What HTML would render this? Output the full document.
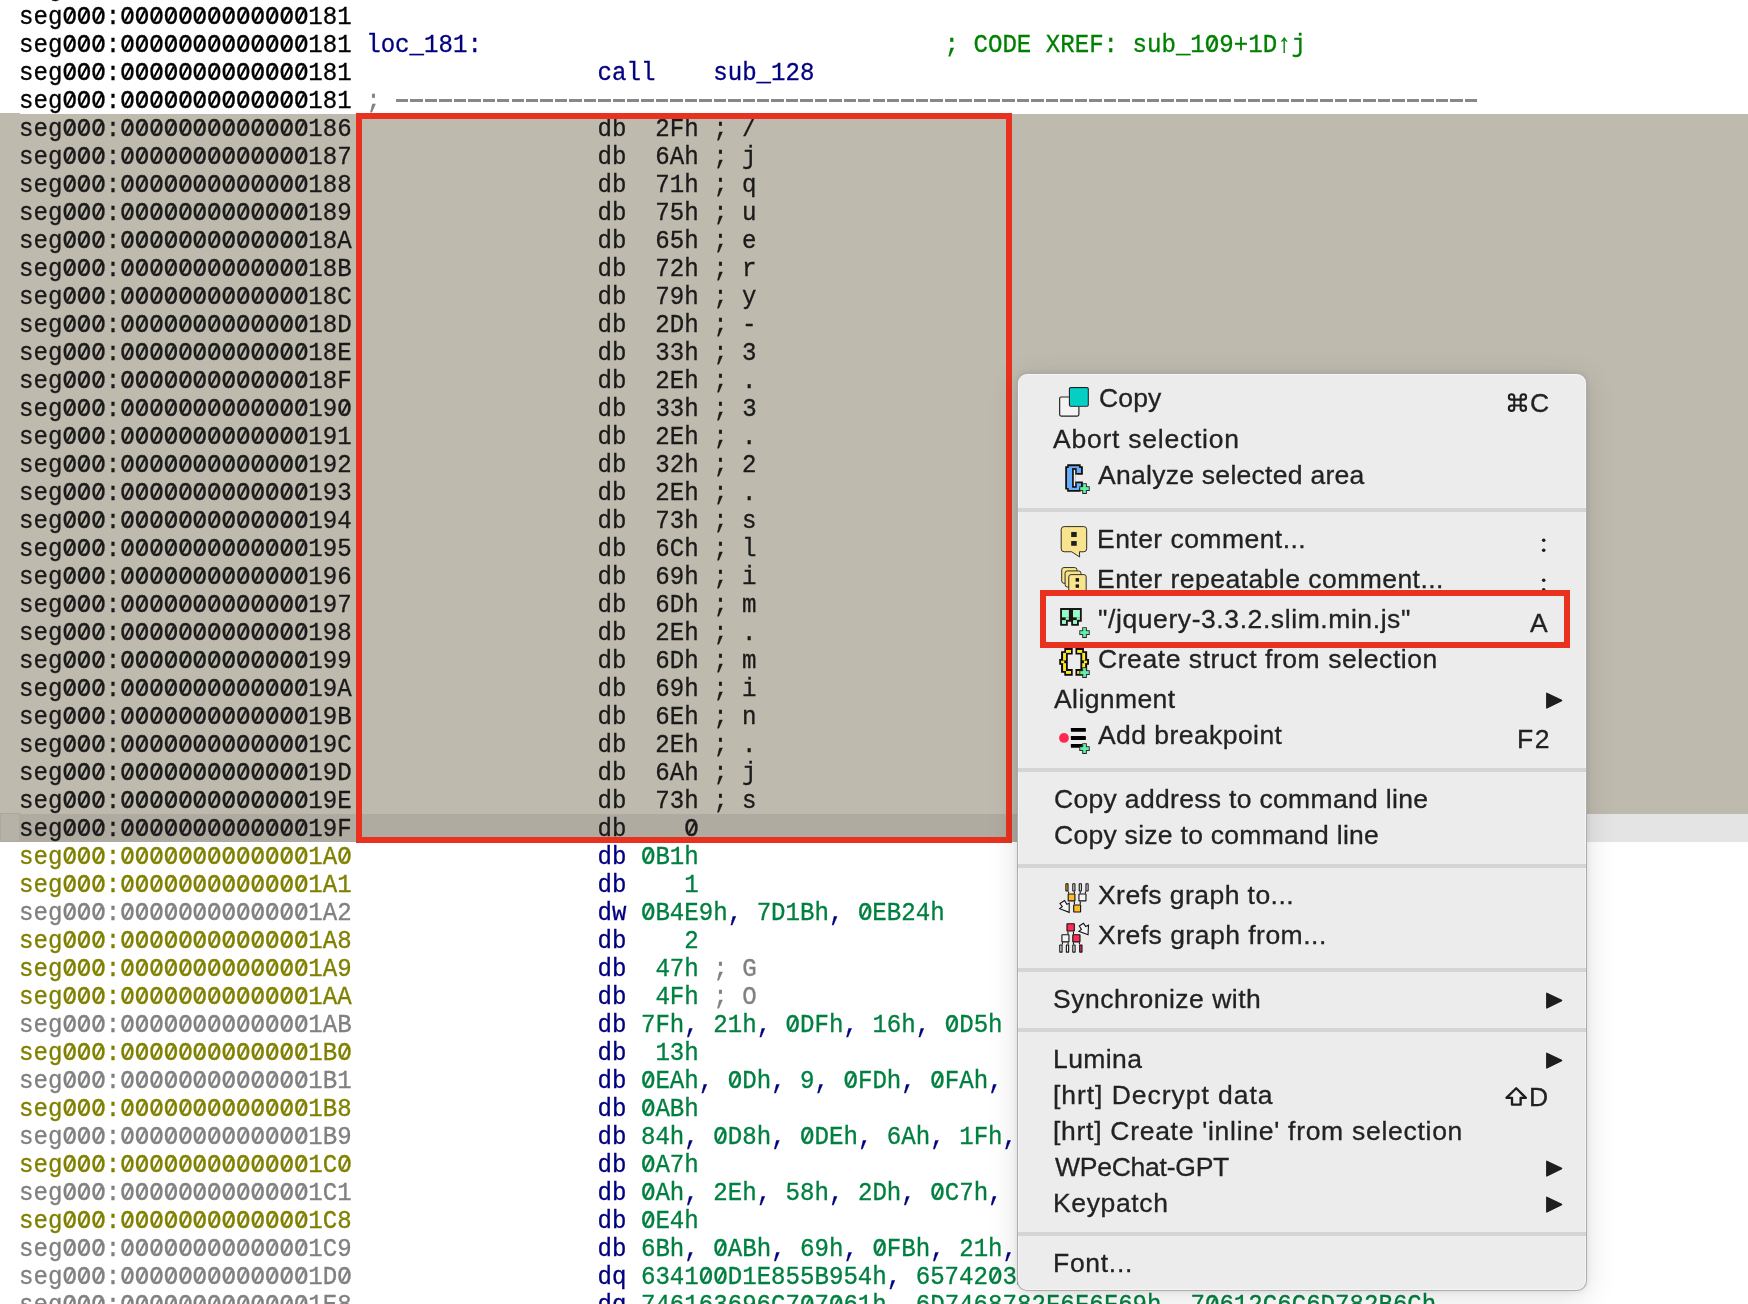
<!DOCTYPE html><html><head><meta charset="utf-8"><style>
html,body{margin:0;padding:0}
body{width:1748px;height:1304px;overflow:hidden;position:relative;background:#fff}
.r{position:absolute;left:0;width:1748px;height:28px}
.t{position:absolute;will-change:transform;left:19px;top:1.5px;white-space:pre;font-family:"Liberation Mono",monospace;font-size:24.1px;line-height:28px;transform:scaleY(1.09);transform-origin:0 20.5px;-webkit-text-stroke:0.3px currentColor}
.z{font-style:normal;position:relative}
.z::after{content:'';position:absolute;left:6.3px;top:6.6px;width:1.9px;height:11px;background:currentColor;transform:rotate(30deg)}
.m{position:absolute;will-change:transform;-webkit-text-stroke:0.3px #222;font-family:"Liberation Sans",sans-serif;font-size:26.5px;color:#222;white-space:pre;line-height:30px}

</style></head><body>
<div style="position:absolute;left:0;top:113px;width:20px;height:701px;background:#bfbaae"></div>
<div style="position:absolute;left:20px;top:114px;width:1728px;height:700px;background:#bfbaae"></div>
<div style="position:absolute;left:0;top:813px;width:20px;height:29px;background:#b6b2a7;box-shadow:inset 0 0 0 1px #aca89d"></div>
<div style="position:absolute;left:20px;top:814px;width:1300px;height:28px;background:#b0aba0"></div>
<div style="position:absolute;left:1320px;top:814px;width:428px;height:28px;background:#e4e4e4"></div>
<div class="r" style="top:-26px"><div class="t"><span style="color:#000000">seg<i class="z">O</i><i class="z">O</i><i class="z">O</i>:<i class="z">O</i><i class="z">O</i><i class="z">O</i><i class="z">O</i><i class="z">O</i><i class="z">O</i><i class="z">O</i><i class="z">O</i><i class="z">O</i><i class="z">O</i><i class="z">O</i><i class="z">O</i><i class="z">O</i>181</span></div></div>
<div class="r" style="top:2px"><div class="t"><span style="color:#000000">seg<i class="z">O</i><i class="z">O</i><i class="z">O</i>:<i class="z">O</i><i class="z">O</i><i class="z">O</i><i class="z">O</i><i class="z">O</i><i class="z">O</i><i class="z">O</i><i class="z">O</i><i class="z">O</i><i class="z">O</i><i class="z">O</i><i class="z">O</i><i class="z">O</i>181</span></div></div>
<div class="r" style="top:30px"><div class="t"><span style="color:#000000">seg<i class="z">O</i><i class="z">O</i><i class="z">O</i>:<i class="z">O</i><i class="z">O</i><i class="z">O</i><i class="z">O</i><i class="z">O</i><i class="z">O</i><i class="z">O</i><i class="z">O</i><i class="z">O</i><i class="z">O</i><i class="z">O</i><i class="z">O</i><i class="z">O</i>181 </span><span style="color:#000080">loc_181:</span><span style="color:#000000">                                </span><span style="color:#008000">; CODE XREF: sub_1<i class="z">O</i>9+1D↑j</span></div></div>
<div class="r" style="top:58px"><div class="t"><span style="color:#000000">seg<i class="z">O</i><i class="z">O</i><i class="z">O</i>:<i class="z">O</i><i class="z">O</i><i class="z">O</i><i class="z">O</i><i class="z">O</i><i class="z">O</i><i class="z">O</i><i class="z">O</i><i class="z">O</i><i class="z">O</i><i class="z">O</i><i class="z">O</i><i class="z">O</i>181                 </span><span style="color:#000080">call</span><span style="color:#000000">    </span><span style="color:#000080">sub_128</span></div></div>
<div class="r" style="top:86px"><div class="t"><span style="color:#000000">seg<i class="z">O</i><i class="z">O</i><i class="z">O</i>:<i class="z">O</i><i class="z">O</i><i class="z">O</i><i class="z">O</i><i class="z">O</i><i class="z">O</i><i class="z">O</i><i class="z">O</i><i class="z">O</i><i class="z">O</i><i class="z">O</i><i class="z">O</i><i class="z">O</i>181 </span><span style="color:#808080">;</span></div></div>
<div class="r" style="top:114px"><div class="t"><span style="color:#1a1a1a">seg<i class="z">O</i><i class="z">O</i><i class="z">O</i>:<i class="z">O</i><i class="z">O</i><i class="z">O</i><i class="z">O</i><i class="z">O</i><i class="z">O</i><i class="z">O</i><i class="z">O</i><i class="z">O</i><i class="z">O</i><i class="z">O</i><i class="z">O</i><i class="z">O</i>186                 db  2Fh ; /</span></div></div>
<div class="r" style="top:142px"><div class="t"><span style="color:#1a1a1a">seg<i class="z">O</i><i class="z">O</i><i class="z">O</i>:<i class="z">O</i><i class="z">O</i><i class="z">O</i><i class="z">O</i><i class="z">O</i><i class="z">O</i><i class="z">O</i><i class="z">O</i><i class="z">O</i><i class="z">O</i><i class="z">O</i><i class="z">O</i><i class="z">O</i>187                 db  6Ah ; j</span></div></div>
<div class="r" style="top:170px"><div class="t"><span style="color:#1a1a1a">seg<i class="z">O</i><i class="z">O</i><i class="z">O</i>:<i class="z">O</i><i class="z">O</i><i class="z">O</i><i class="z">O</i><i class="z">O</i><i class="z">O</i><i class="z">O</i><i class="z">O</i><i class="z">O</i><i class="z">O</i><i class="z">O</i><i class="z">O</i><i class="z">O</i>188                 db  71h ; q</span></div></div>
<div class="r" style="top:198px"><div class="t"><span style="color:#1a1a1a">seg<i class="z">O</i><i class="z">O</i><i class="z">O</i>:<i class="z">O</i><i class="z">O</i><i class="z">O</i><i class="z">O</i><i class="z">O</i><i class="z">O</i><i class="z">O</i><i class="z">O</i><i class="z">O</i><i class="z">O</i><i class="z">O</i><i class="z">O</i><i class="z">O</i>189                 db  75h ; u</span></div></div>
<div class="r" style="top:226px"><div class="t"><span style="color:#1a1a1a">seg<i class="z">O</i><i class="z">O</i><i class="z">O</i>:<i class="z">O</i><i class="z">O</i><i class="z">O</i><i class="z">O</i><i class="z">O</i><i class="z">O</i><i class="z">O</i><i class="z">O</i><i class="z">O</i><i class="z">O</i><i class="z">O</i><i class="z">O</i><i class="z">O</i>18A                 db  65h ; e</span></div></div>
<div class="r" style="top:254px"><div class="t"><span style="color:#1a1a1a">seg<i class="z">O</i><i class="z">O</i><i class="z">O</i>:<i class="z">O</i><i class="z">O</i><i class="z">O</i><i class="z">O</i><i class="z">O</i><i class="z">O</i><i class="z">O</i><i class="z">O</i><i class="z">O</i><i class="z">O</i><i class="z">O</i><i class="z">O</i><i class="z">O</i>18B                 db  72h ; r</span></div></div>
<div class="r" style="top:282px"><div class="t"><span style="color:#1a1a1a">seg<i class="z">O</i><i class="z">O</i><i class="z">O</i>:<i class="z">O</i><i class="z">O</i><i class="z">O</i><i class="z">O</i><i class="z">O</i><i class="z">O</i><i class="z">O</i><i class="z">O</i><i class="z">O</i><i class="z">O</i><i class="z">O</i><i class="z">O</i><i class="z">O</i>18C                 db  79h ; y</span></div></div>
<div class="r" style="top:310px"><div class="t"><span style="color:#1a1a1a">seg<i class="z">O</i><i class="z">O</i><i class="z">O</i>:<i class="z">O</i><i class="z">O</i><i class="z">O</i><i class="z">O</i><i class="z">O</i><i class="z">O</i><i class="z">O</i><i class="z">O</i><i class="z">O</i><i class="z">O</i><i class="z">O</i><i class="z">O</i><i class="z">O</i>18D                 db  2Dh ; -</span></div></div>
<div class="r" style="top:338px"><div class="t"><span style="color:#1a1a1a">seg<i class="z">O</i><i class="z">O</i><i class="z">O</i>:<i class="z">O</i><i class="z">O</i><i class="z">O</i><i class="z">O</i><i class="z">O</i><i class="z">O</i><i class="z">O</i><i class="z">O</i><i class="z">O</i><i class="z">O</i><i class="z">O</i><i class="z">O</i><i class="z">O</i>18E                 db  33h ; 3</span></div></div>
<div class="r" style="top:366px"><div class="t"><span style="color:#1a1a1a">seg<i class="z">O</i><i class="z">O</i><i class="z">O</i>:<i class="z">O</i><i class="z">O</i><i class="z">O</i><i class="z">O</i><i class="z">O</i><i class="z">O</i><i class="z">O</i><i class="z">O</i><i class="z">O</i><i class="z">O</i><i class="z">O</i><i class="z">O</i><i class="z">O</i>18F                 db  2Eh ; .</span></div></div>
<div class="r" style="top:394px"><div class="t"><span style="color:#1a1a1a">seg<i class="z">O</i><i class="z">O</i><i class="z">O</i>:<i class="z">O</i><i class="z">O</i><i class="z">O</i><i class="z">O</i><i class="z">O</i><i class="z">O</i><i class="z">O</i><i class="z">O</i><i class="z">O</i><i class="z">O</i><i class="z">O</i><i class="z">O</i><i class="z">O</i>19<i class="z">O</i>                 db  33h ; 3</span></div></div>
<div class="r" style="top:422px"><div class="t"><span style="color:#1a1a1a">seg<i class="z">O</i><i class="z">O</i><i class="z">O</i>:<i class="z">O</i><i class="z">O</i><i class="z">O</i><i class="z">O</i><i class="z">O</i><i class="z">O</i><i class="z">O</i><i class="z">O</i><i class="z">O</i><i class="z">O</i><i class="z">O</i><i class="z">O</i><i class="z">O</i>191                 db  2Eh ; .</span></div></div>
<div class="r" style="top:450px"><div class="t"><span style="color:#1a1a1a">seg<i class="z">O</i><i class="z">O</i><i class="z">O</i>:<i class="z">O</i><i class="z">O</i><i class="z">O</i><i class="z">O</i><i class="z">O</i><i class="z">O</i><i class="z">O</i><i class="z">O</i><i class="z">O</i><i class="z">O</i><i class="z">O</i><i class="z">O</i><i class="z">O</i>192                 db  32h ; 2</span></div></div>
<div class="r" style="top:478px"><div class="t"><span style="color:#1a1a1a">seg<i class="z">O</i><i class="z">O</i><i class="z">O</i>:<i class="z">O</i><i class="z">O</i><i class="z">O</i><i class="z">O</i><i class="z">O</i><i class="z">O</i><i class="z">O</i><i class="z">O</i><i class="z">O</i><i class="z">O</i><i class="z">O</i><i class="z">O</i><i class="z">O</i>193                 db  2Eh ; .</span></div></div>
<div class="r" style="top:506px"><div class="t"><span style="color:#1a1a1a">seg<i class="z">O</i><i class="z">O</i><i class="z">O</i>:<i class="z">O</i><i class="z">O</i><i class="z">O</i><i class="z">O</i><i class="z">O</i><i class="z">O</i><i class="z">O</i><i class="z">O</i><i class="z">O</i><i class="z">O</i><i class="z">O</i><i class="z">O</i><i class="z">O</i>194                 db  73h ; s</span></div></div>
<div class="r" style="top:534px"><div class="t"><span style="color:#1a1a1a">seg<i class="z">O</i><i class="z">O</i><i class="z">O</i>:<i class="z">O</i><i class="z">O</i><i class="z">O</i><i class="z">O</i><i class="z">O</i><i class="z">O</i><i class="z">O</i><i class="z">O</i><i class="z">O</i><i class="z">O</i><i class="z">O</i><i class="z">O</i><i class="z">O</i>195                 db  6Ch ; l</span></div></div>
<div class="r" style="top:562px"><div class="t"><span style="color:#1a1a1a">seg<i class="z">O</i><i class="z">O</i><i class="z">O</i>:<i class="z">O</i><i class="z">O</i><i class="z">O</i><i class="z">O</i><i class="z">O</i><i class="z">O</i><i class="z">O</i><i class="z">O</i><i class="z">O</i><i class="z">O</i><i class="z">O</i><i class="z">O</i><i class="z">O</i>196                 db  69h ; i</span></div></div>
<div class="r" style="top:590px"><div class="t"><span style="color:#1a1a1a">seg<i class="z">O</i><i class="z">O</i><i class="z">O</i>:<i class="z">O</i><i class="z">O</i><i class="z">O</i><i class="z">O</i><i class="z">O</i><i class="z">O</i><i class="z">O</i><i class="z">O</i><i class="z">O</i><i class="z">O</i><i class="z">O</i><i class="z">O</i><i class="z">O</i>197                 db  6Dh ; m</span></div></div>
<div class="r" style="top:618px"><div class="t"><span style="color:#1a1a1a">seg<i class="z">O</i><i class="z">O</i><i class="z">O</i>:<i class="z">O</i><i class="z">O</i><i class="z">O</i><i class="z">O</i><i class="z">O</i><i class="z">O</i><i class="z">O</i><i class="z">O</i><i class="z">O</i><i class="z">O</i><i class="z">O</i><i class="z">O</i><i class="z">O</i>198                 db  2Eh ; .</span></div></div>
<div class="r" style="top:646px"><div class="t"><span style="color:#1a1a1a">seg<i class="z">O</i><i class="z">O</i><i class="z">O</i>:<i class="z">O</i><i class="z">O</i><i class="z">O</i><i class="z">O</i><i class="z">O</i><i class="z">O</i><i class="z">O</i><i class="z">O</i><i class="z">O</i><i class="z">O</i><i class="z">O</i><i class="z">O</i><i class="z">O</i>199                 db  6Dh ; m</span></div></div>
<div class="r" style="top:674px"><div class="t"><span style="color:#1a1a1a">seg<i class="z">O</i><i class="z">O</i><i class="z">O</i>:<i class="z">O</i><i class="z">O</i><i class="z">O</i><i class="z">O</i><i class="z">O</i><i class="z">O</i><i class="z">O</i><i class="z">O</i><i class="z">O</i><i class="z">O</i><i class="z">O</i><i class="z">O</i><i class="z">O</i>19A                 db  69h ; i</span></div></div>
<div class="r" style="top:702px"><div class="t"><span style="color:#1a1a1a">seg<i class="z">O</i><i class="z">O</i><i class="z">O</i>:<i class="z">O</i><i class="z">O</i><i class="z">O</i><i class="z">O</i><i class="z">O</i><i class="z">O</i><i class="z">O</i><i class="z">O</i><i class="z">O</i><i class="z">O</i><i class="z">O</i><i class="z">O</i><i class="z">O</i>19B                 db  6Eh ; n</span></div></div>
<div class="r" style="top:730px"><div class="t"><span style="color:#1a1a1a">seg<i class="z">O</i><i class="z">O</i><i class="z">O</i>:<i class="z">O</i><i class="z">O</i><i class="z">O</i><i class="z">O</i><i class="z">O</i><i class="z">O</i><i class="z">O</i><i class="z">O</i><i class="z">O</i><i class="z">O</i><i class="z">O</i><i class="z">O</i><i class="z">O</i>19C                 db  2Eh ; .</span></div></div>
<div class="r" style="top:758px"><div class="t"><span style="color:#1a1a1a">seg<i class="z">O</i><i class="z">O</i><i class="z">O</i>:<i class="z">O</i><i class="z">O</i><i class="z">O</i><i class="z">O</i><i class="z">O</i><i class="z">O</i><i class="z">O</i><i class="z">O</i><i class="z">O</i><i class="z">O</i><i class="z">O</i><i class="z">O</i><i class="z">O</i>19D                 db  6Ah ; j</span></div></div>
<div class="r" style="top:786px"><div class="t"><span style="color:#1a1a1a">seg<i class="z">O</i><i class="z">O</i><i class="z">O</i>:<i class="z">O</i><i class="z">O</i><i class="z">O</i><i class="z">O</i><i class="z">O</i><i class="z">O</i><i class="z">O</i><i class="z">O</i><i class="z">O</i><i class="z">O</i><i class="z">O</i><i class="z">O</i><i class="z">O</i>19E                 db  73h ; s</span></div></div>
<div class="r" style="top:814px"><div class="t"><span style="color:#1a1a1a">seg<i class="z">O</i><i class="z">O</i><i class="z">O</i>:<i class="z">O</i><i class="z">O</i><i class="z">O</i><i class="z">O</i><i class="z">O</i><i class="z">O</i><i class="z">O</i><i class="z">O</i><i class="z">O</i><i class="z">O</i><i class="z">O</i><i class="z">O</i><i class="z">O</i>19F                 db    <i class="z">O</i></span></div></div>
<div class="r" style="top:842px"><div class="t"><span style="color:#808000">seg<i class="z">O</i><i class="z">O</i><i class="z">O</i>:<i class="z">O</i><i class="z">O</i><i class="z">O</i><i class="z">O</i><i class="z">O</i><i class="z">O</i><i class="z">O</i><i class="z">O</i><i class="z">O</i><i class="z">O</i><i class="z">O</i><i class="z">O</i><i class="z">O</i>1A<i class="z">O</i></span><span style="color:#000000">                 </span><span style="color:#000080">db</span><span style="color:#000000"> </span><span style="color:#008040"><i class="z">O</i>B1h</span></div></div>
<div class="r" style="top:870px"><div class="t"><span style="color:#808000">seg<i class="z">O</i><i class="z">O</i><i class="z">O</i>:<i class="z">O</i><i class="z">O</i><i class="z">O</i><i class="z">O</i><i class="z">O</i><i class="z">O</i><i class="z">O</i><i class="z">O</i><i class="z">O</i><i class="z">O</i><i class="z">O</i><i class="z">O</i><i class="z">O</i>1A1</span><span style="color:#000000">                 </span><span style="color:#000080">db</span><span style="color:#000000"> </span><span style="color:#008040">   1</span></div></div>
<div class="r" style="top:898px"><div class="t"><span style="color:#808080">seg<i class="z">O</i><i class="z">O</i><i class="z">O</i>:<i class="z">O</i><i class="z">O</i><i class="z">O</i><i class="z">O</i><i class="z">O</i><i class="z">O</i><i class="z">O</i><i class="z">O</i><i class="z">O</i><i class="z">O</i><i class="z">O</i><i class="z">O</i><i class="z">O</i>1A2</span><span style="color:#000000">                 </span><span style="color:#000080">dw</span><span style="color:#000000"> </span><span style="color:#008040"><i class="z">O</i>B4E9h</span><span style="color:#000080">,</span><span style="color:#000000"> </span><span style="color:#008040">7D1Bh</span><span style="color:#000080">,</span><span style="color:#000000"> </span><span style="color:#008040"><i class="z">O</i>EB24h</span></div></div>
<div class="r" style="top:926px"><div class="t"><span style="color:#808000">seg<i class="z">O</i><i class="z">O</i><i class="z">O</i>:<i class="z">O</i><i class="z">O</i><i class="z">O</i><i class="z">O</i><i class="z">O</i><i class="z">O</i><i class="z">O</i><i class="z">O</i><i class="z">O</i><i class="z">O</i><i class="z">O</i><i class="z">O</i><i class="z">O</i>1A8</span><span style="color:#000000">                 </span><span style="color:#000080">db</span><span style="color:#000000"> </span><span style="color:#008040">   2</span></div></div>
<div class="r" style="top:954px"><div class="t"><span style="color:#808000">seg<i class="z">O</i><i class="z">O</i><i class="z">O</i>:<i class="z">O</i><i class="z">O</i><i class="z">O</i><i class="z">O</i><i class="z">O</i><i class="z">O</i><i class="z">O</i><i class="z">O</i><i class="z">O</i><i class="z">O</i><i class="z">O</i><i class="z">O</i><i class="z">O</i>1A9</span><span style="color:#000000">                 </span><span style="color:#000080">db</span><span style="color:#000000"> </span><span style="color:#008040"> 47h</span><span style="color:#808080"> ; G</span></div></div>
<div class="r" style="top:982px"><div class="t"><span style="color:#808000">seg<i class="z">O</i><i class="z">O</i><i class="z">O</i>:<i class="z">O</i><i class="z">O</i><i class="z">O</i><i class="z">O</i><i class="z">O</i><i class="z">O</i><i class="z">O</i><i class="z">O</i><i class="z">O</i><i class="z">O</i><i class="z">O</i><i class="z">O</i><i class="z">O</i>1AA</span><span style="color:#000000">                 </span><span style="color:#000080">db</span><span style="color:#000000"> </span><span style="color:#008040"> 4Fh</span><span style="color:#808080"> ; O</span></div></div>
<div class="r" style="top:1010px"><div class="t"><span style="color:#808080">seg<i class="z">O</i><i class="z">O</i><i class="z">O</i>:<i class="z">O</i><i class="z">O</i><i class="z">O</i><i class="z">O</i><i class="z">O</i><i class="z">O</i><i class="z">O</i><i class="z">O</i><i class="z">O</i><i class="z">O</i><i class="z">O</i><i class="z">O</i><i class="z">O</i>1AB</span><span style="color:#000000">                 </span><span style="color:#000080">db</span><span style="color:#000000"> </span><span style="color:#008040">7Fh</span><span style="color:#000080">,</span><span style="color:#000000"> </span><span style="color:#008040">21h</span><span style="color:#000080">,</span><span style="color:#000000"> </span><span style="color:#008040"><i class="z">O</i>DFh</span><span style="color:#000080">,</span><span style="color:#000000"> </span><span style="color:#008040">16h</span><span style="color:#000080">,</span><span style="color:#000000"> </span><span style="color:#008040"><i class="z">O</i>D5h</span></div></div>
<div class="r" style="top:1038px"><div class="t"><span style="color:#808000">seg<i class="z">O</i><i class="z">O</i><i class="z">O</i>:<i class="z">O</i><i class="z">O</i><i class="z">O</i><i class="z">O</i><i class="z">O</i><i class="z">O</i><i class="z">O</i><i class="z">O</i><i class="z">O</i><i class="z">O</i><i class="z">O</i><i class="z">O</i><i class="z">O</i>1B<i class="z">O</i></span><span style="color:#000000">                 </span><span style="color:#000080">db</span><span style="color:#000000"> </span><span style="color:#008040"> 13h</span></div></div>
<div class="r" style="top:1066px"><div class="t"><span style="color:#808080">seg<i class="z">O</i><i class="z">O</i><i class="z">O</i>:<i class="z">O</i><i class="z">O</i><i class="z">O</i><i class="z">O</i><i class="z">O</i><i class="z">O</i><i class="z">O</i><i class="z">O</i><i class="z">O</i><i class="z">O</i><i class="z">O</i><i class="z">O</i><i class="z">O</i>1B1</span><span style="color:#000000">                 </span><span style="color:#000080">db</span><span style="color:#000000"> </span><span style="color:#008040"><i class="z">O</i>EAh</span><span style="color:#000080">,</span><span style="color:#000000"> </span><span style="color:#008040"><i class="z">O</i>Dh</span><span style="color:#000080">,</span><span style="color:#000000"> </span><span style="color:#008040">9</span><span style="color:#000080">,</span><span style="color:#000000"> </span><span style="color:#008040"><i class="z">O</i>FDh</span><span style="color:#000080">,</span><span style="color:#000000"> </span><span style="color:#008040"><i class="z">O</i>FAh</span><span style="color:#000080">,</span><span style="color:#000000"> </span><span style="color:#008040">3Ch</span><span style="color:#000080">,</span><span style="color:#000000"> </span><span style="color:#008040"><i class="z">O</i>A1h</span></div></div>
<div class="r" style="top:1094px"><div class="t"><span style="color:#808000">seg<i class="z">O</i><i class="z">O</i><i class="z">O</i>:<i class="z">O</i><i class="z">O</i><i class="z">O</i><i class="z">O</i><i class="z">O</i><i class="z">O</i><i class="z">O</i><i class="z">O</i><i class="z">O</i><i class="z">O</i><i class="z">O</i><i class="z">O</i><i class="z">O</i>1B8</span><span style="color:#000000">                 </span><span style="color:#000080">db</span><span style="color:#000000"> </span><span style="color:#008040"><i class="z">O</i>ABh</span></div></div>
<div class="r" style="top:1122px"><div class="t"><span style="color:#808080">seg<i class="z">O</i><i class="z">O</i><i class="z">O</i>:<i class="z">O</i><i class="z">O</i><i class="z">O</i><i class="z">O</i><i class="z">O</i><i class="z">O</i><i class="z">O</i><i class="z">O</i><i class="z">O</i><i class="z">O</i><i class="z">O</i><i class="z">O</i><i class="z">O</i>1B9</span><span style="color:#000000">                 </span><span style="color:#000080">db</span><span style="color:#000000"> </span><span style="color:#008040">84h</span><span style="color:#000080">,</span><span style="color:#000000"> </span><span style="color:#008040"><i class="z">O</i>D8h</span><span style="color:#000080">,</span><span style="color:#000000"> </span><span style="color:#008040"><i class="z">O</i>DEh</span><span style="color:#000080">,</span><span style="color:#000000"> </span><span style="color:#008040">6Ah</span><span style="color:#000080">,</span><span style="color:#000000"> </span><span style="color:#008040">1Fh</span><span style="color:#000080">,</span><span style="color:#000000"> </span><span style="color:#008040"><i class="z">O</i>C2h</span><span style="color:#000080">,</span><span style="color:#000000"> </span><span style="color:#008040">7Bh</span></div></div>
<div class="r" style="top:1150px"><div class="t"><span style="color:#808000">seg<i class="z">O</i><i class="z">O</i><i class="z">O</i>:<i class="z">O</i><i class="z">O</i><i class="z">O</i><i class="z">O</i><i class="z">O</i><i class="z">O</i><i class="z">O</i><i class="z">O</i><i class="z">O</i><i class="z">O</i><i class="z">O</i><i class="z">O</i><i class="z">O</i>1C<i class="z">O</i></span><span style="color:#000000">                 </span><span style="color:#000080">db</span><span style="color:#000000"> </span><span style="color:#008040"><i class="z">O</i>A7h</span></div></div>
<div class="r" style="top:1178px"><div class="t"><span style="color:#808080">seg<i class="z">O</i><i class="z">O</i><i class="z">O</i>:<i class="z">O</i><i class="z">O</i><i class="z">O</i><i class="z">O</i><i class="z">O</i><i class="z">O</i><i class="z">O</i><i class="z">O</i><i class="z">O</i><i class="z">O</i><i class="z">O</i><i class="z">O</i><i class="z">O</i>1C1</span><span style="color:#000000">                 </span><span style="color:#000080">db</span><span style="color:#000000"> </span><span style="color:#008040"><i class="z">O</i>Ah</span><span style="color:#000080">,</span><span style="color:#000000"> </span><span style="color:#008040">2Eh</span><span style="color:#000080">,</span><span style="color:#000000"> </span><span style="color:#008040">58h</span><span style="color:#000080">,</span><span style="color:#000000"> </span><span style="color:#008040">2Dh</span><span style="color:#000080">,</span><span style="color:#000000"> </span><span style="color:#008040"><i class="z">O</i>C7h</span><span style="color:#000080">,</span><span style="color:#000000"> </span><span style="color:#008040">91h</span><span style="color:#000080">,</span><span style="color:#000000"> </span><span style="color:#008040"><i class="z">O</i>Eh</span></div></div>
<div class="r" style="top:1206px"><div class="t"><span style="color:#808000">seg<i class="z">O</i><i class="z">O</i><i class="z">O</i>:<i class="z">O</i><i class="z">O</i><i class="z">O</i><i class="z">O</i><i class="z">O</i><i class="z">O</i><i class="z">O</i><i class="z">O</i><i class="z">O</i><i class="z">O</i><i class="z">O</i><i class="z">O</i><i class="z">O</i>1C8</span><span style="color:#000000">                 </span><span style="color:#000080">db</span><span style="color:#000000"> </span><span style="color:#008040"><i class="z">O</i>E4h</span></div></div>
<div class="r" style="top:1234px"><div class="t"><span style="color:#808080">seg<i class="z">O</i><i class="z">O</i><i class="z">O</i>:<i class="z">O</i><i class="z">O</i><i class="z">O</i><i class="z">O</i><i class="z">O</i><i class="z">O</i><i class="z">O</i><i class="z">O</i><i class="z">O</i><i class="z">O</i><i class="z">O</i><i class="z">O</i><i class="z">O</i>1C9</span><span style="color:#000000">                 </span><span style="color:#000080">db</span><span style="color:#000000"> </span><span style="color:#008040">6Bh</span><span style="color:#000080">,</span><span style="color:#000000"> </span><span style="color:#008040"><i class="z">O</i>ABh</span><span style="color:#000080">,</span><span style="color:#000000"> </span><span style="color:#008040">69h</span><span style="color:#000080">,</span><span style="color:#000000"> </span><span style="color:#008040"><i class="z">O</i>FBh</span><span style="color:#000080">,</span><span style="color:#000000"> </span><span style="color:#008040">21h</span><span style="color:#000080">,</span><span style="color:#000000"> </span><span style="color:#008040">3Eh</span><span style="color:#000080">,</span><span style="color:#000000"> </span><span style="color:#008040"><i class="z">O</i>B2h</span></div></div>
<div class="r" style="top:1262px"><div class="t"><span style="color:#808080">seg<i class="z">O</i><i class="z">O</i><i class="z">O</i>:<i class="z">O</i><i class="z">O</i><i class="z">O</i><i class="z">O</i><i class="z">O</i><i class="z">O</i><i class="z">O</i><i class="z">O</i><i class="z">O</i><i class="z">O</i><i class="z">O</i><i class="z">O</i><i class="z">O</i>1D<i class="z">O</i></span><span style="color:#000000">                 </span><span style="color:#000080">dq</span><span style="color:#000000"> </span><span style="color:#008040">6341<i class="z">O</i><i class="z">O</i>D1E855B954h</span><span style="color:#000080">,</span><span style="color:#000000"> </span><span style="color:#008040">65742<i class="z">O</i>3A64656E69h</span><span style="color:#000080">,</span><span style="color:#000000"> </span><span style="color:#008040">69746E6F632<i class="z">O</i>746Fh</span></div></div>
<div class="r" style="top:1290px"><div class="t"><span style="color:#808080">seg<i class="z">O</i><i class="z">O</i><i class="z">O</i>:<i class="z">O</i><i class="z">O</i><i class="z">O</i><i class="z">O</i><i class="z">O</i><i class="z">O</i><i class="z">O</i><i class="z">O</i><i class="z">O</i><i class="z">O</i><i class="z">O</i><i class="z">O</i><i class="z">O</i>1E8</span><span style="color:#000000">                 </span><span style="color:#000080">dq</span><span style="color:#000000"> </span><span style="color:#008040">746163696C7<i class="z">O</i>7<i class="z">O</i>61h</span><span style="color:#000080">,</span><span style="color:#000000"> </span><span style="color:#008040">6D7468782F6F6F69h</span><span style="color:#000080">,</span><span style="color:#000000"> </span><span style="color:#008040">7<i class="z">O</i>612C6C6D782B6Ch</span></div></div>
<div style="position:absolute;left:396px;top:99px;width:1082px;height:3px;background:repeating-linear-gradient(to right,#888 0,#888 12.4px,transparent 12.4px,transparent 14.44px)"></div>
<div style="position:absolute;left:356px;top:113px;width:644px;height:718px;border:6px solid #e8321f"></div>
<div style="position:absolute;left:1017px;top:373px;width:568px;height:916px;border:1px solid rgba(0,0,0,0.27);border-radius:10px;background:#ececec;box-shadow:0 6px 30px rgba(0,0,0,0.13),0 0 7px rgba(0,0,0,0.09),inset 0 0 0 1px rgba(255,255,255,0.5)"></div>
<div style="position:absolute;left:1018px;top:508px;width:568px;height:4px;background:#d5d5d5"></div>
<div style="position:absolute;left:1018px;top:768px;width:568px;height:4px;background:#d5d5d5"></div>
<div style="position:absolute;left:1018px;top:864px;width:568px;height:4px;background:#d5d5d5"></div>
<div style="position:absolute;left:1018px;top:968px;width:568px;height:4px;background:#d5d5d5"></div>
<div style="position:absolute;left:1018px;top:1028px;width:568px;height:4px;background:#d5d5d5"></div>
<div style="position:absolute;left:1018px;top:1232px;width:568px;height:4px;background:#d5d5d5"></div>
<div class="m" style="left:1098.60px;top:383.00px;letter-spacing:0.133px">Copy</div>
<div class="m" style="left:1053.40px;top:424.00px;letter-spacing:0.764px">Abort selection</div>
<div class="m" style="left:1098.00px;top:460.00px;letter-spacing:0.275px">Analyze selected area</div>
<div class="m" style="left:1097.00px;top:524.00px;letter-spacing:0.460px">Enter comment...</div>
<div class="m" style="left:1097.00px;top:564.00px;letter-spacing:0.465px">Enter repeatable comment...</div>
<div class="m" style="left:1098.00px;top:604.00px;letter-spacing:0.585px">&quot;/jquery-3.3.2.slim.min.js&quot;</div>
<div class="m" style="left:1098.00px;top:644.00px;letter-spacing:0.567px">Create struct from selection</div>
<div class="m" style="left:1053.70px;top:684.00px;letter-spacing:0.412px">Alignment</div>
<div class="m" style="left:1097.70px;top:720.00px;letter-spacing:0.438px">Add breakpoint</div>
<div class="m" style="left:1054.00px;top:784.00px;letter-spacing:0.322px">Copy address to command line</div>
<div class="m" style="left:1054.00px;top:820.00px;letter-spacing:0.279px">Copy size to command line</div>
<div class="m" style="left:1098.00px;top:880.00px;letter-spacing:0.438px">Xrefs graph to...</div>
<div class="m" style="left:1098.00px;top:920.00px;letter-spacing:0.489px">Xrefs graph from...</div>
<div class="m" style="left:1053.00px;top:984.00px;letter-spacing:0.500px">Synchronize with</div>
<div class="m" style="left:1053.00px;top:1044.00px;letter-spacing:0.400px">Lumina</div>
<div class="m" style="left:1053.00px;top:1080.00px;letter-spacing:0.959px">[hrt] Decrypt data</div>
<div class="m" style="left:1053.00px;top:1116.00px;letter-spacing:0.717px">[hrt] Create &#x27;inline&#x27; from selection</div>
<div class="m" style="left:1055.00px;top:1152.00px;letter-spacing:-0.240px">WPeChat-GPT</div>
<div class="m" style="left:1053.00px;top:1188.00px;letter-spacing:0.629px">Keypatch</div>
<div class="m" style="left:1053.00px;top:1248.00px;letter-spacing:0.700px">Font...</div>
<div class="m" style="left:1530.10px;top:388px;letter-spacing:0px">C</div>
<div class="m" style="left:1530.40px;top:608px;letter-spacing:0px">A</div>
<div class="m" style="left:1516.80px;top:724px;letter-spacing:1.6px">F2</div>
<div class="m" style="left:1529.00px;top:1082px;letter-spacing:0px">D</div>
<svg style="position:absolute;left:0;top:0" width="1748" height="1304" viewBox="0 0 1748 1304"><g transform="translate(1056.00,382) scale(0.030675)"><rect x="119.0" y="489.0" width="627.0" height="622.0" rx="50" fill="#f4f4f4" stroke="#222" stroke-width="38"/><rect x="475.0" y="220.0" width="540.0" height="535.0" rx="40" fill="none" stroke="#efefef" stroke-width="110"/><rect x="439.0" y="184.0" width="612.0" height="607.0" rx="40" fill="#05cfc4" stroke="#241f1f" stroke-width="38"/><rect x="480.0" y="225.0" width="530.0" height="525.0" rx="0" fill="none" stroke="#00e0d2" stroke-width="20"/></g><g transform="translate(1056.00,458) scale(0.030675)"><polygon points="365,200 805,200 805,265 875,265 875,545 625,545 625,765 875,765 875,1030 805,1030 805,1100 365,1100 365,1030 300,1030 300,265 365,265" fill="#140e0a"/><polygon points="415,265 755,265 755,330 815,330 815,490 675,490 675,820 815,820 815,975 755,975 755,1040 415,1040 415,975 360,975 360,330 415,330" fill="#64b0ff"/><rect x="525" y="330" width="150" height="640" rx="0" fill="#140e0a"/><rect x="580" y="385" width="45" height="530" rx="0" fill="#efefef"/><rect x="625" y="545" width="65" height="220" rx="0" fill="#ececec"/><polygon points="855,820 1005,820 1005,920 1100,920 1100,1075 1005,1075 1005,1170 855,1170 855,1075 760,1075 760,920 855,920" fill="#2b2326"/><rect x="885" y="850" width="90" height="290" rx="0" fill="#5fefa8"/><rect x="790" y="950" width="280" height="95" rx="0" fill="#5fefa8"/></g><g transform="translate(1056.00,522) scale(0.030675)"><path d="M265,150 H905 Q1000,150 1000,245 V875 Q1000,970 905,970 H765 L770,1140 L510,970 H265 Q170,970 170,875 V245 Q170,150 265,150 Z" fill="#f8e48e" stroke="#2e2a22" stroke-width="32"/><rect x="495" y="325" width="180" height="165" rx="0" fill="#1f1f1f"/><rect x="495" y="620" width="180" height="155" rx="0" fill="#1f1f1f"/></g><g transform="translate(1056.00,562) scale(0.030675)"><rect x="186.0" y="181.0" width="498.0" height="513.0" rx="75" fill="#f8e48e" stroke="#2e2a22" stroke-width="32"/><rect x="296.0" y="291.0" width="518.0" height="523.0" rx="75" fill="#f8e48e" stroke="#2e2a22" stroke-width="32"/><rect x="416.0" y="411.0" width="568.0" height="583.0" rx="75" fill="#f8e48e" stroke="#2e2a22" stroke-width="32"/><rect x="640" y="525" width="110" height="115" rx="0" fill="#141414"/><rect x="640" y="730" width="110" height="110" rx="0" fill="#141414"/></g><g transform="translate(1056.00,602) scale(0.030675)"><polygon points="135,195 840,195 840,640 745,640 745,775 495,775 495,640 385,640 385,775 135,775" fill="#1a1414"/><rect x="195" y="260" width="225" height="240" rx="0" fill="#96fcc8"/><rect x="315" y="500" width="105" height="80" rx="0" fill="#96fcc8"/><rect x="195" y="590" width="130" height="125" rx="0" fill="#96fcc8"/><rect x="555" y="260" width="225" height="240" rx="0" fill="#96fcc8"/><rect x="675" y="500" width="105" height="80" rx="0" fill="#96fcc8"/><rect x="555" y="590" width="130" height="125" rx="0" fill="#96fcc8"/><polygon points="855,820 1005,820 1005,920 1100,920 1100,1075 1005,1075 1005,1170 855,1170 855,1075 760,1075 760,920 855,920" fill="#2b2326"/><rect x="885" y="850" width="90" height="290" rx="0" fill="#5fefa8"/><rect x="790" y="950" width="280" height="95" rx="0" fill="#5fefa8"/></g><g transform="translate(1056.00,642) scale(0.030675)"><polygon points="270,195 545,195 545,410 385,410 385,880 545,880 545,1100 270,1100 270,1000 165,1000 165,740 105,740 105,555 165,555 165,300 270,300" fill="#0a0a14"/><polygon points="910,195 635,195 635,410 795,410 795,880 635,880 635,1100 910,1100 910,1000 1015,1000 1015,740 1075,740 1075,555 1015,555 1015,300 910,300" fill="#0a0a14"/><rect x="325" y="260" width="165" height="95" rx="0" fill="#ffe81e"/><rect x="690" y="260" width="165" height="95" rx="0" fill="#ffe81e"/><rect x="230" y="355" width="95" height="245" rx="0" fill="#ffe81e"/><rect x="855" y="355" width="95" height="245" rx="0" fill="#ffe81e"/><rect x="165" y="610" width="105" height="80" rx="0" fill="#ffe81e"/><rect x="910" y="610" width="105" height="80" rx="0" fill="#ffe81e"/><rect x="230" y="690" width="95" height="255" rx="0" fill="#ffe81e"/><rect x="855" y="690" width="95" height="255" rx="0" fill="#ffe81e"/><rect x="325" y="945" width="165" height="95" rx="0" fill="#ffe81e"/><rect x="690" y="945" width="165" height="95" rx="0" fill="#ffe81e"/><polygon points="855,820 1005,820 1005,920 1100,920 1100,1075 1005,1075 1005,1170 855,1170 855,1075 760,1075 760,920 855,920" fill="#2b2326"/><rect x="885" y="850" width="90" height="290" rx="0" fill="#5fefa8"/><rect x="790" y="950" width="280" height="95" rx="0" fill="#5fefa8"/></g><g transform="translate(1056.00,718) scale(0.030675)"><circle cx="260" cy="650" r="160" fill="#ff2a50"/><rect x="485" y="330" width="490" height="120" rx="15" fill="#000"/><rect x="485" y="590" width="490" height="125" rx="15" fill="#000"/><rect x="485" y="850" width="375" height="120" rx="15" fill="#000"/><polygon points="855,820 1005,820 1005,920 1100,920 1100,1075 1005,1075 1005,1170 855,1170 855,1075 760,1075 760,920 855,920" fill="#2b2326"/><rect x="885" y="850" width="90" height="290" rx="0" fill="#5fefa8"/><rect x="790" y="950" width="280" height="95" rx="0" fill="#5fefa8"/></g><g transform="translate(1056.00,878) scale(0.030675)"><line x1="410" y1="440" x2="410" y2="505" stroke="#111" stroke-width="36"/><line x1="600" y1="440" x2="600" y2="505" stroke="#111" stroke-width="36"/><line x1="790" y1="440" x2="790" y2="505" stroke="#111" stroke-width="36"/><line x1="960" y1="440" x2="960" y2="505" stroke="#111" stroke-width="36"/><line x1="600" y1="765" x2="600" y2="860" stroke="#111" stroke-width="36"/><line x1="790" y1="765" x2="790" y2="860" stroke="#111" stroke-width="36"/><rect x="323.0" y="188.0" width="69.0" height="234.0" rx="6" fill="#ffbb2a" stroke="#111" stroke-width="36"/><rect x="548.0" y="188.0" width="69.0" height="234.0" rx="6" fill="#f4f4f4" stroke="#111" stroke-width="36"/><rect x="758.0" y="188.0" width="69.0" height="234.0" rx="6" fill="#f4f4f4" stroke="#111" stroke-width="36"/><rect x="978.0" y="188.0" width="69.0" height="234.0" rx="6" fill="#f4f4f4" stroke="#111" stroke-width="36"/><rect x="398.0" y="523.0" width="219.0" height="224.0" rx="6" fill="#ffbb2a" stroke="#111" stroke-width="36"/><rect x="748.0" y="523.0" width="229.0" height="224.0" rx="6" fill="#f4f4f4" stroke="#111" stroke-width="36"/><rect x="578.0" y="878.0" width="224.0" height="229.0" rx="6" fill="#ffbb2a" stroke="#111" stroke-width="36"/><polygon points="130,830 280,735 355,860 430,820 430,1120 120,1000 205,935" fill="#f4f4f4" stroke="#111" stroke-width="36" stroke-linejoin="miter"/></g><g transform="translate(1056.00,918) scale(0.030675)"><line x1="390" y1="440" x2="390" y2="530" stroke="#111" stroke-width="36"/><line x1="570" y1="440" x2="570" y2="530" stroke="#111" stroke-width="36"/><line x1="210" y1="795" x2="210" y2="860" stroke="#111" stroke-width="36"/><line x1="395" y1="795" x2="395" y2="860" stroke="#111" stroke-width="36"/><line x1="570" y1="795" x2="570" y2="860" stroke="#111" stroke-width="36"/><line x1="765" y1="795" x2="765" y2="860" stroke="#111" stroke-width="36"/><rect x="358.0" y="188.0" width="239.0" height="234.0" rx="6" fill="#ff2d55" stroke="#111" stroke-width="36"/><rect x="193.0" y="548.0" width="229.0" height="229.0" rx="6" fill="#f4f4f4" stroke="#111" stroke-width="36"/><rect x="548.0" y="548.0" width="234.0" height="229.0" rx="6" fill="#ff2d55" stroke="#111" stroke-width="36"/><rect x="123.0" y="878.0" width="74.0" height="234.0" rx="6" fill="#f4f4f4" stroke="#111" stroke-width="36"/><rect x="338.0" y="878.0" width="74.0" height="234.0" rx="6" fill="#f4f4f4" stroke="#111" stroke-width="36"/><rect x="548.0" y="878.0" width="74.0" height="234.0" rx="6" fill="#f4f4f4" stroke="#111" stroke-width="36"/><rect x="773.0" y="878.0" width="74.0" height="234.0" rx="6" fill="#ff2d55" stroke="#111" stroke-width="36"/><polygon points="760,260 895,175 970,280 1060,235 1045,545 745,435 830,370" fill="#f4f4f4" stroke="#111" stroke-width="36" stroke-linejoin="miter"/></g><g transform="translate(1507.8,393.2)"><path d="M6.45,3.75 A2.7,2.7 0 1 0 3.75,6.45 L15.55,6.45 A2.7,2.7 0 1 0 12.850000000000001,3.75 L12.850000000000001,14.95 A2.7,2.7 0 1 0 15.55,12.25 L3.75,12.25 A2.7,2.7 0 1 0 6.45,14.95 Z" fill="none" stroke="#1e1e1e" stroke-width="2.1"/></g><g transform="translate(1500,1080) scale(0.040048)"><path d="M405,205 L645,445 L515,445 L515,615 L300,615 L300,445 L160,445 Z" fill="none" stroke="#1e1e1e" stroke-width="58" stroke-linejoin="round"/></g><circle cx="1543.7" cy="540.2" r="1.8" fill="#1e1e1e"/><circle cx="1543.7" cy="550.2" r="1.8" fill="#1e1e1e"/><circle cx="1543.7" cy="580.3" r="1.8" fill="#1e1e1e"/><circle cx="1543.7" cy="589.8" r="1.8" fill="#1e1e1e"/><path d="M1546.8,693.3 L1561.6,700.5 L1546.8,707.9 Z" fill="#1e1e1e" stroke="#1e1e1e" stroke-width="1.4" stroke-linejoin="round"/><path d="M1546.8,993.3 L1561.6,1000.5 L1546.8,1007.9 Z" fill="#1e1e1e" stroke="#1e1e1e" stroke-width="1.4" stroke-linejoin="round"/><path d="M1546.8,1053.3 L1561.6,1060.5 L1546.8,1067.9 Z" fill="#1e1e1e" stroke="#1e1e1e" stroke-width="1.4" stroke-linejoin="round"/><path d="M1546.8,1161.3 L1561.6,1168.5 L1546.8,1175.9 Z" fill="#1e1e1e" stroke="#1e1e1e" stroke-width="1.4" stroke-linejoin="round"/><path d="M1546.8,1197.3 L1561.6,1204.5 L1546.8,1211.9 Z" fill="#1e1e1e" stroke="#1e1e1e" stroke-width="1.4" stroke-linejoin="round"/></svg>
<div style="position:absolute;left:1040px;top:590px;width:518px;height:46px;border:6px solid #e8321f"></div>
</body></html>
